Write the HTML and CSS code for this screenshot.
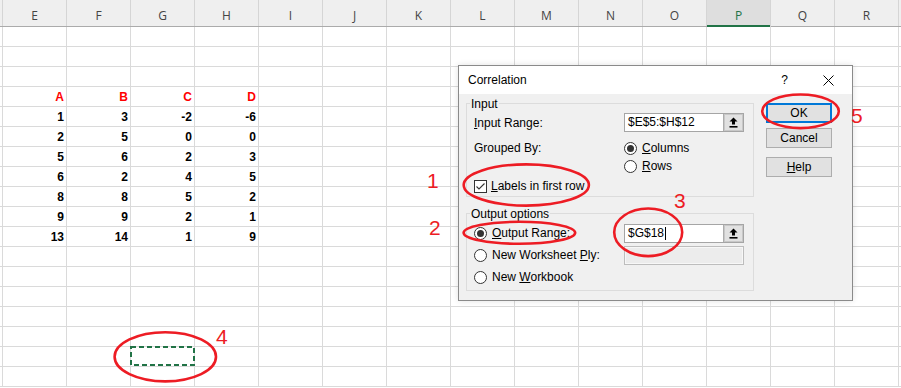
FILE: index.html
```html
<!DOCTYPE html>
<html>
<head>
<meta charset="utf-8">
<title>Correlation</title>
<link rel="stylesheet" href="styles.css">
</head>
<body>
<div class="sheet">
  <div class="colhead">
    <div class="ch corner"></div>
    <div class="ch">E</div><div class="ch">F</div><div class="ch">G</div><div class="ch">H</div>
    <div class="ch">I</div><div class="ch">J</div><div class="ch">K</div><div class="ch">L</div>
    <div class="ch">M</div><div class="ch">N</div><div class="ch">O</div><div class="ch sel">P</div>
    <div class="ch">Q</div><div class="ch">R</div><div class="ch rest"></div>
  </div>
  <div class="rows">
    <div class="row"></div>
    <div class="row"></div>
    <div class="row"></div>
    <div class="row"><span class="cell hdr first">A</span><span class="cell hdr">B</span><span class="cell hdr">C</span><span class="cell hdr">D</span></div>
    <div class="row"><span class="cell first">1</span><span class="cell">3</span><span class="cell">-2</span><span class="cell">-6</span></div>
    <div class="row"><span class="cell first">2</span><span class="cell">5</span><span class="cell">0</span><span class="cell">0</span></div>
    <div class="row"><span class="cell first">5</span><span class="cell">6</span><span class="cell">2</span><span class="cell">3</span></div>
    <div class="row"><span class="cell first">6</span><span class="cell">2</span><span class="cell">4</span><span class="cell">5</span></div>
    <div class="row"><span class="cell first">8</span><span class="cell">8</span><span class="cell">5</span><span class="cell">2</span></div>
    <div class="row"><span class="cell first">9</span><span class="cell">9</span><span class="cell">2</span><span class="cell">1</span></div>
    <div class="row"><span class="cell first">13</span><span class="cell">14</span><span class="cell">1</span><span class="cell">9</span></div>
    <div class="row"></div>
    <div class="row"></div>
    <div class="row"></div>
    <div class="row"></div>
    <div class="row"></div>
    <div class="row"></div>
    <div class="row"></div>
  </div>
</div>

<div class="dialog">
  <div class="titlebar">
    <span class="title">Correlation</span>
    <span class="help">?</span>
    <svg class="close" width="11" height="11" viewBox="0 0 11 11"><path d="M0.5 0.5 L10.5 10.5 M10.5 0.5 L0.5 10.5" stroke="#000" stroke-width="1" fill="none"/></svg>
  </div>
  <div class="dbody">
    <div class="leftcol">
      <div class="group">
        <span class="legend">Input</span>
        <div class="grow r1">
          <span><u>I</u>nput Range:</span>
          <div class="rbox"><span class="rtxt">$E$5:$H$12</span><span class="rbtn"><svg width="9" height="11" viewBox="0 0 9 11"><path d="M4.5 0.5 L8.5 4.5 H6 V7.5 H3 V4.5 H0.5 Z" fill="#000"/><rect x="0.5" y="9" width="8" height="1.6" fill="#000"/></svg></span></div>
        </div>
        <div class="grow r2">
          <span>Grouped By:</span>
          <span class="opt"><span class="radio on"></span><span><u>C</u>olumns</span></span>
        </div>
        <div class="grow r3">
          <span></span>
          <span class="opt"><span class="radio"></span><span><u>R</u>ows</span></span>
        </div>
        <div class="grow r4">
          <span class="opt chk"><svg width="13" height="13" viewBox="0 0 13 13"><rect x="0.5" y="0.5" width="12" height="12" fill="#fff" stroke="#333"/><path d="M2.5 6.5 L5 9 L10.5 3.5" fill="none" stroke="#333" stroke-width="1.1"/></svg><span><u>L</u>abels in first row</span></span>
        </div>
      </div>
      <div class="group out">
        <span class="legend">Output options</span>
        <div class="grow o1">
          <span class="opt"><span class="radio on"></span><span><u>O</u>utput Range:</span></span>
          <div class="rbox"><span class="rtxt">$G$18<span class="caret"></span></span><span class="rbtn"><svg width="9" height="11" viewBox="0 0 9 11"><path d="M4.5 0.5 L8.5 4.5 H6 V7.5 H3 V4.5 H0.5 Z" fill="#000"/><rect x="0.5" y="9" width="8" height="1.6" fill="#000"/></svg></span></div>
        </div>
        <div class="grow o1">
          <span class="opt"><span class="radio"></span><span>New Worksheet <u>P</u>ly:</span></span>
          <div class="dbox"></div>
        </div>
        <div class="grow o1">
          <span class="opt"><span class="radio"></span><span>New <u>W</u>orkbook</span></span>
        </div>
      </div>
    </div>
    <div class="btncol">
      <button class="btn ok">OK</button>
      <button class="btn cancel">Cancel</button>
      <button class="btn helpbtn"><u>H</u>elp</button>
    </div>
  </div>
</div>

<svg class="marks" width="901" height="388" viewBox="0 0 901 388">
  <rect x="131" y="347" width="63" height="18" fill="none" stroke="#217346" stroke-width="2" stroke-dasharray="5 3"/>
  <g fill="none" stroke="#ed1c24" stroke-width="2.6">
    <ellipse cx="800.5" cy="111.3" rx="38.3" ry="16.8"/>
    <ellipse cx="526.3" cy="185" rx="62.6" ry="20.6"/>
    <ellipse cx="519.4" cy="232.8" rx="55.8" ry="11"/>
    <ellipse cx="648.2" cy="232.3" rx="34" ry="23.8"/>
    <ellipse cx="165.3" cy="356.8" rx="50.7" ry="24.6"/>
  </g>
</svg>
<span class="num n1">1</span>
<span class="num n2">2</span>
<span class="num n3">3</span>
<span class="num n4">4</span>
<span class="num n5">5</span>
</body>
</html>
```

FILE: styles.css
```css
html, body {
  margin: 0;
  padding: 0;
  background: #fff;
  overflow: hidden;
}
body {
  width: 901px;
  height: 388px;
  position: relative;
  font-family: "Liberation Sans", Arial, sans-serif;
}

/* spreadsheet */
.colhead {
  display: grid;
  grid-template-columns: 3px repeat(14, 64px) 1fr;
  grid-template-rows: 26px;
  background: #efefef;
  border-bottom: 1px solid #ababab;
}
.ch {
  box-sizing: border-box;
  height: 26px;
  border-right: 1px solid #d5d5d5;
  text-align: center;
  font-family: "Open Sans", sans-serif;
  font-size: 12px;
  line-height: 16px;
  padding-top: 8px;
  color: #444;
}
.ch.rest { border-right: none; }
.ch.sel {
  background: #dedede;
  color: #217346;
  height: 27px;
  box-shadow: inset 0 -2px 0 #217346;
}
.rows {
  background-image: linear-gradient(to right, transparent 63px, #dadada 63px);
  background-size: 64px 100%;
  background-position: 3px 0;
  background-repeat: repeat-x;
}
.row {
  display: grid;
  grid-template-columns: 3px repeat(14, 64px) 1fr;
  box-sizing: border-box;
  height: 20px;
  border-bottom: 1px solid #dadada;
}
.cell {
  text-align: right;
  padding-right: 3px;
  padding-top: 1px;
  font-weight: bold;
  font-size: 12px;
  line-height: 18px;
  color: #000;
}
.cell.first { grid-column: 2; }
.cell.hdr { color: #ff0000; }

/* dialog */
.dialog {
  position: absolute;
  left: 458px;
  top: 65px;
  width: 395px;
  height: 236px;
  box-sizing: border-box;
  border: 1px solid #8a8a8a;
  background: #f0f0f0;
  display: flex;
  flex-direction: column;
  font-size: 12px;
  color: #000;
  box-shadow: 0 0 6px rgba(0,0,0,0.12);
}
.titlebar {
  height: 28px;
  background: #fff;
  display: flex;
  align-items: center;
  padding-left: 9px;
  flex: none;
}
.title { flex: 1; }
.help { margin-right: 35px; }
.close { margin-right: 18px; }
.dbody {
  flex: 1;
  display: flex;
  padding: 9px 0 0 7px;
}
.leftcol {
  width: 288px;
  display: flex;
  flex-direction: column;
}
.group {
  border: 1px solid #dcdcdc;
  padding: 0 0 1px 7px;
}
.group.out {
  margin-top: 16px;
  padding-bottom: 2px;
}
.legend {
  display: table;
  margin: -8px 0 0 -4px;
  padding: 0 1px;
  line-height: 16px;
  background: #f0f0f0;
}
.grow {
  display: grid;
  grid-template-columns: 150px 120px;
  align-items: center;
}
.r1 { margin-top: 1px; height: 19px; }
.r2 { margin-top: 7px; height: 18px; }
.r3 { height: 18px; }
.r4 { margin-top: 2px; height: 18px; }
.o1 { height: 22px; }
.rbox {
  box-sizing: border-box;
  width: 120px;
  height: 19px;
  border: 1px solid #a5a5a5;
  background: #fff;
  display: flex;
}
.rtxt {
  flex: 1;
  padding-left: 3px;
  line-height: 17px;
  display: flex;
  align-items: center;
}
.caret {
  display: inline-block;
  width: 1px;
  height: 13px;
  background: #000;
  margin-left: 1px;
}
.rbtn {
  width: 20px;
  box-sizing: border-box;
  background: #e1e1e1;
  border-left: 1px solid #adadad;
  box-shadow: inset 0 0 0 1px #c8c8c8;
  display: flex;
  align-items: center;
  justify-content: center;
}
.dbox {
  box-sizing: border-box;
  width: 120px;
  height: 19px;
  border: 1px solid #bdbdbd;
  background: #ececec;
  box-shadow: inset 0 0 0 1px #f7f7f7;
}
.opt {
  display: flex;
  align-items: center;
  gap: 5px;
}
.opt.chk { gap: 4px; }
.radio {
  width: 13px;
  height: 13px;
  box-sizing: border-box;
  border: 1px solid #333;
  border-radius: 50%;
  background: #fff;
  flex: none;
  display: flex;
  align-items: center;
  justify-content: center;
}
.radio.on::after {
  content: "";
  width: 7px;
  height: 7px;
  border-radius: 50%;
  background: #333;
}
.btncol {
  margin-left: 12px;
  display: flex;
  flex-direction: column;
  width: 66px;
}
.btn {
  box-sizing: border-box;
  width: 66px;
  height: 20px;
  margin: 0;
  padding: 0;
  background: #e1e1e1;
  border: 1px solid #adadad;
  font-family: "Liberation Sans", Arial, sans-serif;
  font-size: 12px;
  color: #000;
}
.btn.ok { border: 2px solid #0078d7; }
.btn.cancel { margin-top: 5px; }
.btn.helpbtn { margin-top: 9px; }

/* annotations */
.marks {
  position: absolute;
  left: 0;
  top: 0;
  pointer-events: none;
}
.num {
  position: absolute;
  color: #ed1c24;
  font-size: 21px;
  line-height: 21px;
}
.n1 { left: 427px; top: 170px; }
.n2 { left: 429px; top: 217px; }
.n3 { left: 674px; top: 190px; }
.n4 { left: 216px; top: 326px; }
.n5 { left: 851px; top: 105px; }
```
